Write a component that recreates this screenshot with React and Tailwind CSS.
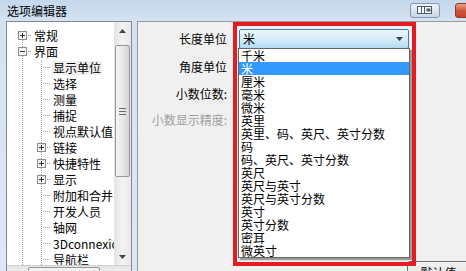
import React from "react";

const font = { fontFamily: '"Noto Sans CJK SC", "Noto Sans", sans-serif' };

const units = [
  "千米",
  "米",
  "厘米",
  "毫米",
  "微米",
  "英里",
  "英里、码、英尺、英寸分数",
  "码",
  "码、英尺、英寸分数",
  "英尺",
  "英尺与英寸",
  "英尺与英寸分数",
  "英寸",
  "英寸分数",
  "密耳",
  "微英寸",
];

const tree = [
  { t: "常规", cells: ["plusFirst"] },
  { t: "界面", cells: ["minus"] },
  { t: "显示单位", cells: ["vline", "tee"], sel: true },
  { t: "选择", cells: ["vline", "tee"] },
  { t: "测量", cells: ["vline", "tee"] },
  { t: "捕捉", cells: ["vline", "tee"] },
  { t: "视点默认值", cells: ["vline", "tee"] },
  { t: "链接", cells: ["vline", "plus"] },
  { t: "快捷特性", cells: ["vline", "plus"] },
  { t: "显示", cells: ["vline", "plus"] },
  { t: "附加和合并", cells: ["vline", "tee"] },
  { t: "开发人员", cells: ["vline", "tee"] },
  { t: "轴网", cells: ["vline", "tee"] },
  { t: "3Dconnexion", cells: ["vline", "tee"] },
  { t: "导航栏", cells: ["vline", "tee"] },
];

const Cell = ({ type }) => {
  const dot = "#9a9a9a";
  const box = type === "plus" || type === "plusFirst" || type === "minus";
  return (
    <svg width="19" height="16" className="shrink-0">
      {(type === "vline" || type === "tee") && (
        <line x1="9.5" y1="0" x2="9.5" y2="16" stroke={dot} strokeDasharray="1 1" />
      )}
      {type === "tee" && (
        <line x1="11" y1="7.5" x2="19" y2="7.5" stroke={dot} strokeDasharray="1 1" />
      )}
      {box && (
        <>
          {type !== "plusFirst" && (
            <line x1="9.5" y1="0" x2="9.5" y2="3" stroke={dot} strokeDasharray="1 1" />
          )}
          <line x1="9.5" y1="12" x2="9.5" y2="16" stroke={dot} strokeDasharray="1 1" />
          <line x1="15" y1="7.5" x2="19" y2="7.5" stroke={dot} strokeDasharray="1 1" />
          <rect x="5.5" y="3.5" width="8" height="8" fill="#f4f4f4" stroke="#8c8c8c" />
          <line x1="7" y1="7.5" x2="12" y2="7.5" stroke="#333" />
          {type !== "minus" && <line x1="9.5" y1="5" x2="9.5" y2="10" stroke="#333" />}
        </>
      )}
    </svg>
  );
};

const Arrow = ({ dir }) => (
  <svg width="7" height="4" viewBox="0 0 7 4">
    <polygon
      points={dir === "up" ? "3.5,0 7,4 0,4" : "0,0 7,0 3.5,4"}
      fill="#404040"
    />
  </svg>
);

const Combo = ({ value, open }) => (
  <div className="relative w-[170px] h-[20px]">
    <div
      className={`h-full flex items-center pl-[3px] pr-[5px] rounded-[2px] border ${
        open
          ? "border-[#3c7fb1] bg-gradient-to-b from-[#eef6fb] via-[#d6ecf9] to-[#b3dbf3]"
          : "border-[#acacac] bg-gradient-to-b from-[#f2f2f2] to-[#dcdcdc]"
      }`}
    >
      {value && <span className="text-[12px] leading-none">{value}</span>}
      <span className="ml-auto">
        <Arrow dir="down" />
      </span>
    </div>
    {open && (
      <div className="absolute top-[19px] left-[-1px] w-[172px] border border-[#646464] bg-white shadow-[2px_2px_1px_rgba(0,0,0,0.35)] z-10">
        {units.map((u) => (
          <div
            key={u}
            className={`h-[13px] pl-[2px] text-[12px] leading-[13px] whitespace-nowrap ${
              u === value ? "bg-[#3399ff] text-white" : "text-black"
            }`}
          >
            {u}
          </div>
        ))}
      </div>
    )}
  </div>
);

const Row = ({ label, gray, className, children }) => (
  <div className={`flex items-center h-[20px] ${className}`}>
    <div
      className={`w-[88px] text-right text-[12px] leading-none whitespace-nowrap ${
        gray ? "text-[#a0a0a0]" : "text-black"
      }`}
    >
      {label}
    </div>
    <div className="ml-[12px]">{children}</div>
  </div>
);

export default function App() {
  return (
    <div
      className="relative w-[466px] h-[271px] overflow-hidden bg-gradient-to-b from-[#d3e1f0] to-[#dde8f4] text-black"
      style={font}
    >
      {/* title bar */}
      <div className="h-[21px] flex items-center pl-[7px] bg-gradient-to-b from-[#c4d7ec] to-[#d4e2f1]">
        <span className="text-[12px] leading-none">选项编辑器</span>
        <div className="ml-auto mr-[-29px] flex items-center gap-[15px] mt-[-1px]">
          <div className="w-[30px] h-[15px] rounded-[3px] border border-[#8396b3] bg-gradient-to-b from-[#eef3f9] to-[#c9d7e8] flex items-center justify-center">
            <svg width="16" height="8" viewBox="0 0 16 8">
              <rect x="0.5" y="0.5" width="14" height="7" fill="#fff" stroke="#4a5a70" />
              <line x1="4.5" y1="1" x2="4.5" y2="7" stroke="#4a5a70" />
              <line x1="7.5" y1="1" x2="7.5" y2="7" stroke="#4a5a70" />
              <rect x="9.5" y="2.5" width="4" height="3" fill="#4a5a70" />
            </svg>
          </div>
          <div className="w-[40px] h-[15px] rounded-[3px] border border-[#8d3a2b] bg-gradient-to-b from-[#e4a08c] via-[#d0573d] to-[#c2432b]" />
        </div>
      </div>

      <div className="flex pl-[6px]">
        {/* tree panel */}
        <div className="w-[126px] h-[270px] border border-[#828790] bg-white flex flex-col">
          <div className="flex h-[243px]">
            <div className="flex-1 overflow-hidden pt-[6px] pl-[6px]">
              {tree.map((n) => (
                <div key={n.t} className="flex items-center h-[16px] whitespace-nowrap">
                  {n.cells.map((c, i) => (
                    <Cell key={i} type={c} />
                  ))}
                  <span
                    className={`ml-[1px] text-[12px] leading-[14px] px-[1px] ${
                      n.sel ? "bg-[#f0f0f0]" : ""
                    }`}
                  >
                    {n.t}
                  </span>
                </div>
              ))}
            </div>
            {/* vertical scrollbar */}
            <div className="w-[17px] flex flex-col bg-gradient-to-r from-[#e3e3e3] via-[#f3f3f3] to-[#e8e8e8]">
              <div className="h-[17px] flex items-center justify-center">
                <Arrow dir="up" />
              </div>
              <div className="flex-1 flex flex-col">
                <div className="mt-[6px] mx-[1px] h-[132px] rounded-[2px] border border-[#979797] bg-gradient-to-r from-[#f5f5f5] via-[#e8e8e8] to-[#d4d4d4] flex flex-col items-center justify-center gap-[2px]">
                  <div className="w-[7px] h-px bg-[#6c6c6c]" />
                  <div className="w-[7px] h-px bg-[#6c6c6c]" />
                  <div className="w-[7px] h-px bg-[#6c6c6c]" />
                </div>
              </div>
              <div className="h-[17px] flex items-center justify-center">
                <Arrow dir="down" />
              </div>
            </div>
          </div>
          {/* horizontal scrollbar */}
          <div className="h-[17px] flex bg-gradient-to-b from-[#e3e3e3] via-[#f3f3f3] to-[#e8e8e8] border-t border-[#d0d0d0]">
            <div className="w-[17px]" />
            <div className="ml-[4px] mt-[1px] w-[72px] h-[14px] rounded-[2px] border border-[#979797] bg-gradient-to-b from-[#f5f5f5] to-[#d8d8d8]" />
          </div>
        </div>

        {/* right panel */}
        <div className="ml-[5px] flex-1 h-[260px] border-l border-t border-[#9a9a9a] bg-[#f0f0f0] pt-[7px] pl-[1px]">
          <Row label="长度单位" className="relative z-10">
            <Combo value="米" open />
          </Row>
          <Row label="角度单位" className="mt-[8px]">
            <Combo />
          </Row>
          <Row label="小数位数:" className="mt-[7px]">
            <Combo />
          </Row>
          <Row label="小数显示精度:" gray className="mt-[6px]">
            <Combo />
          </Row>
          <div className="mt-[131px] ml-[268px] w-[63px] h-[23px] rounded-[3px] border border-[#707070] bg-gradient-to-b from-[#f2f2f2] to-[#dddddd] flex items-center justify-center">
            <span className="text-[12px] leading-none">默认值</span>
          </div>
        </div>
      </div>

      {/* red annotation frame */}
      <div className="absolute left-[233px] top-[22px] w-[183px] h-[244px] border-[4px] border-[#e31b23] pointer-events-none z-20" />
    </div>
  );
}
